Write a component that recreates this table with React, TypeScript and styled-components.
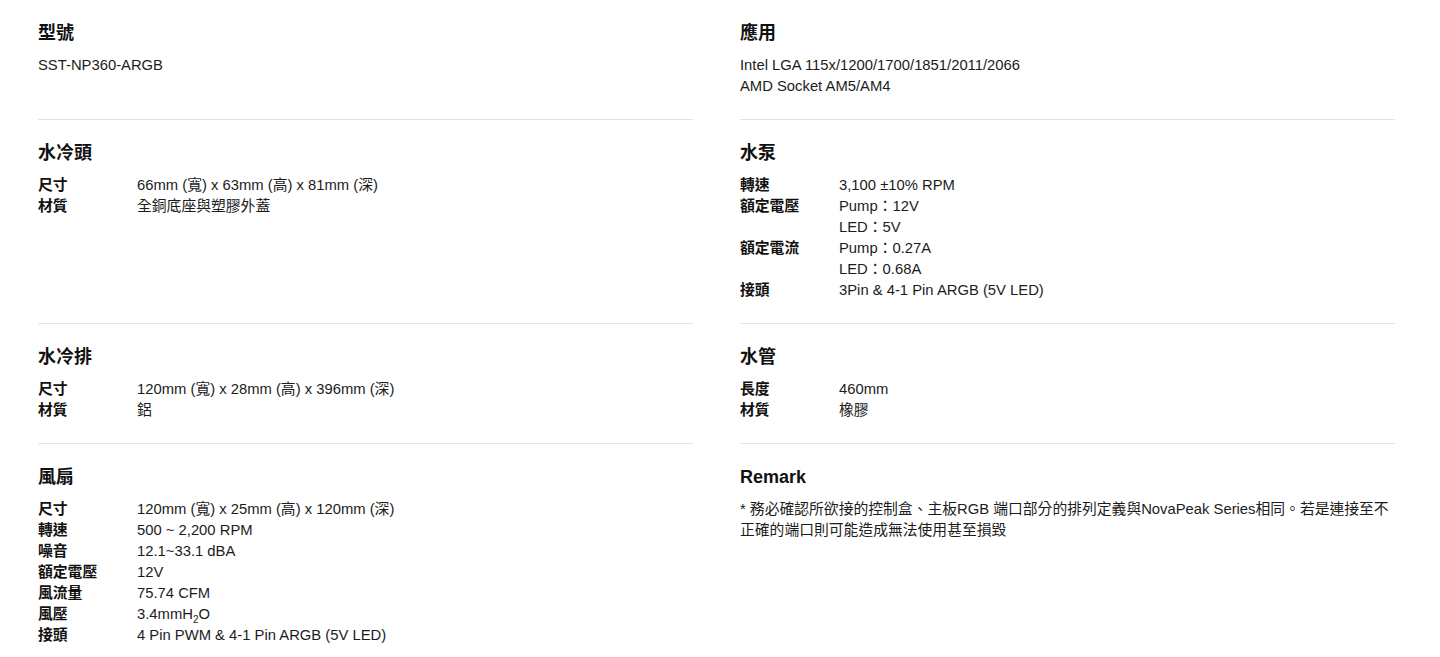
import React from 'react'
import styled, { createGlobalStyle } from 'styled-components'

const GlobalStyle = createGlobalStyle`
    html, body {
        margin: 0;
        padding: 0;
        background: #ffffff;
    }
    body {
        font-family: "Liberation Sans", Arial, "Noto Sans CJK TC", sans-serif;
        color: #1c1c1c;
    }
`

const SPEC_GRID = styled.div`
    display: grid;
    grid-template-columns: 655px 655px;
    column-gap: 47px;
    padding: 0 45px 0 38px;
`

const SECTION = styled.section<{ $last?: boolean }>`
    padding: 21px 0 22px 0;
    border-bottom: ${(p) => (p.$last ? 'none' : '1px solid #e3e3e3')};
`

const SECTION_TITLE = styled.h3`
    margin: 0 0 10px 0;
    font-size: 18px;
    line-height: 24px;
    font-weight: 700;
    color: #111111;
`

const SPEC_ROW = styled.div`
    display: grid;
    grid-template-columns: 99px 1fr;
    font-size: 14.8px;
    line-height: 21px;
`

const SPEC_LABEL = styled.div`
    font-weight: 700;
    color: #111111;
`

const SPEC_VALUE = styled.div`
    color: #1c1c1c;
`

const PLAIN_TEXT = styled.div`
    font-size: 14.8px;
    line-height: 21px;
    color: #1c1c1c;
`

const SUB = styled.sub`
    font-size: 10px;
    line-height: 0;
`

type Row = { label?: string; value: React.ReactNode }

const SpecRows = ({ rows }: { rows: Row[] }) => (
    <>
        {rows.map((r, i) => (
            <SPEC_ROW key={i}>
                <SPEC_LABEL>{r.label ?? ''}</SPEC_LABEL>
                <SPEC_VALUE>{r.value}</SPEC_VALUE>
            </SPEC_ROW>
        ))}
    </>
)

const App = () => {
    return (
        <>
            <GlobalStyle />
            <SPEC_GRID>
                <SECTION>
                    <SECTION_TITLE>型號</SECTION_TITLE>
                    <PLAIN_TEXT>SST-NP360-ARGB</PLAIN_TEXT>
                </SECTION>
                <SECTION>
                    <SECTION_TITLE>應用</SECTION_TITLE>
                    <PLAIN_TEXT>Intel LGA 115x/1200/1700/1851/2011/2066</PLAIN_TEXT>
                    <PLAIN_TEXT>AMD Socket AM5/AM4</PLAIN_TEXT>
                </SECTION>

                <SECTION>
                    <SECTION_TITLE>水冷頭</SECTION_TITLE>
                    <SpecRows
                        rows={[
                            { label: '尺寸', value: '66mm (寬) x 63mm (高) x 81mm (深)' },
                            { label: '材質', value: '全銅底座與塑膠外蓋' },
                        ]}
                    />
                </SECTION>
                <SECTION>
                    <SECTION_TITLE>水泵</SECTION_TITLE>
                    <SpecRows
                        rows={[
                            { label: '轉速', value: '3,100 ±10% RPM' },
                            { label: '額定電壓', value: 'Pump：12V' },
                            { value: 'LED：5V' },
                            { label: '額定電流', value: 'Pump：0.27A' },
                            { value: 'LED：0.68A' },
                            { label: '接頭', value: '3Pin & 4-1 Pin ARGB (5V LED)' },
                        ]}
                    />
                </SECTION>

                <SECTION>
                    <SECTION_TITLE>水冷排</SECTION_TITLE>
                    <SpecRows
                        rows={[
                            { label: '尺寸', value: '120mm (寬) x 28mm (高) x 396mm (深)' },
                            { label: '材質', value: '鋁' },
                        ]}
                    />
                </SECTION>
                <SECTION>
                    <SECTION_TITLE>水管</SECTION_TITLE>
                    <SpecRows
                        rows={[
                            { label: '長度', value: '460mm' },
                            { label: '材質', value: '橡膠' },
                        ]}
                    />
                </SECTION>

                <SECTION $last>
                    <SECTION_TITLE>風扇</SECTION_TITLE>
                    <SpecRows
                        rows={[
                            { label: '尺寸', value: '120mm (寬) x 25mm (高) x 120mm (深)' },
                            { label: '轉速', value: '500 ~ 2,200 RPM' },
                            { label: '噪音', value: '12.1~33.1 dBA' },
                            { label: '額定電壓', value: '12V' },
                            { label: '風流量', value: '75.74 CFM' },
                            {
                                label: '風壓',
                                value: (
                                    <>
                                        3.4mmH<SUB>2</SUB>O
                                    </>
                                ),
                            },
                            { label: '接頭', value: '4 Pin PWM & 4-1 Pin ARGB (5V LED)' },
                        ]}
                    />
                </SECTION>
                <SECTION $last>
                    <SECTION_TITLE>Remark</SECTION_TITLE>
                    <PLAIN_TEXT>
                        * 務必確認所欲接的控制盒、主板RGB 端口部分的排列定義與NovaPeak Series相同。若是連接至不正確的端口則可能造成無法使用甚至損毀
                    </PLAIN_TEXT>
                </SECTION>
            </SPEC_GRID>
        </>
    )
}

export default App
